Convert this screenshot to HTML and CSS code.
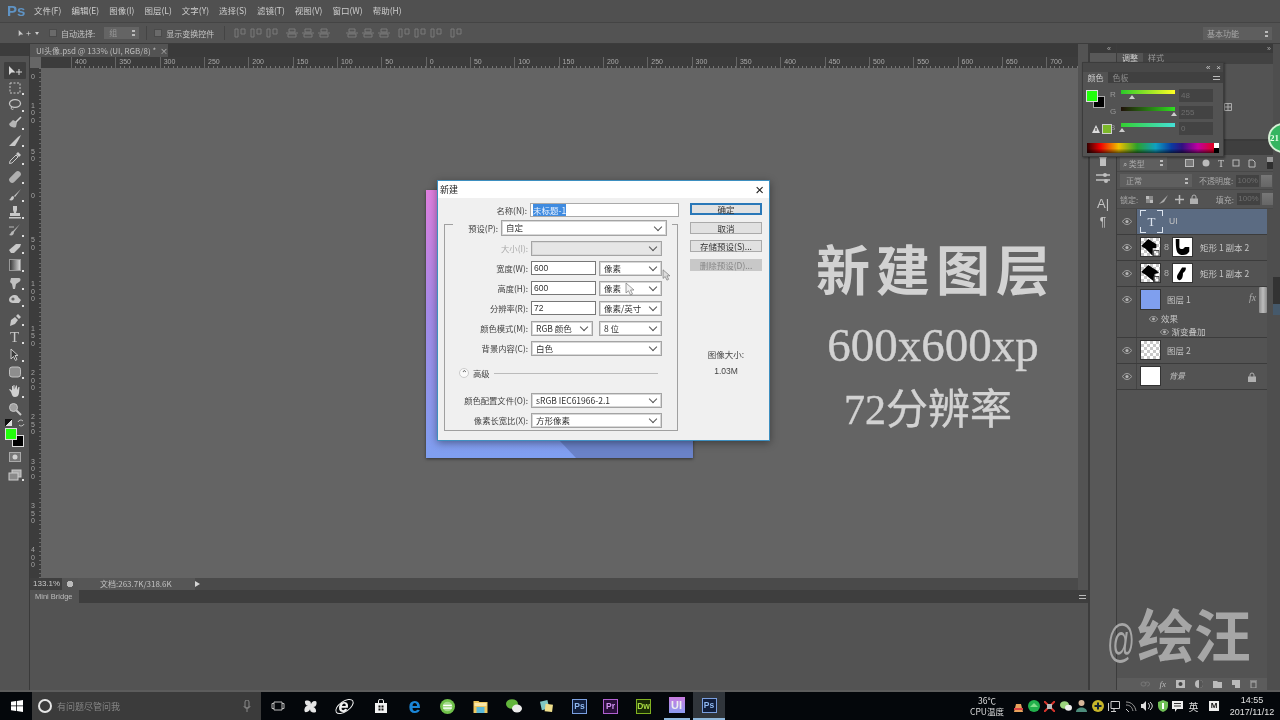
FILE: index.html
```html
<!DOCTYPE html>
<html lang="zh">
<head>
<meta charset="utf-8">
<title>Photoshop 新建</title>
<link rel="stylesheet" href="styles.css">
</head>
<body>
<svg class="sprite" width="0" height="0">
  <symbol id="eye" viewBox="0 0 12 8"><path d="M.5 4C2.5 1 4.200 .5 6 .5S9.500 1 11.500 4C9.500 7 7.800 7.500 6 7.500S2.500 7 .5 4Z" fill="none" stroke="#b5b5b5"/><circle cx="6" cy="4" r="1.900" fill="#b5b5b5"/></symbol>
  <symbol id="align" viewBox="0 0 12 10"><path d="M1 1h3v8H1zM7 1h4v5H7z" fill="none" stroke="#7b7b7b"/></symbol>
  <symbol id="align2" viewBox="0 0 12 10"><path d="M0 5h12M3 1h6v3H3zM2 6h8v3H2z" fill="none" stroke="#7b7b7b"/></symbol>
  <symbol id="lock" viewBox="0 0 8 10"><path d="M2 5V3a2 2 0 0 1 4 0v2" fill="none" stroke="#b0b0b0"/><rect y="4.500" width="8" height="5.500" fill="#b0b0b0"/></symbol>
</svg>

<div class="app">
  <header class="menubar">
    <span class="logo">Ps</span>
    <nav class="menu">
      <span>文件(F)</span><span>编辑(E)</span><span>图像(I)</span><span>图层(L)</span><span>文字(Y)</span><span>选择(S)</span><span>滤镜(T)</span><span>视图(V)</span><span>窗口(W)</span><span>帮助(H)</span>
    </nav>
  </header>

  <div class="options">
    <svg class="opt-move" viewBox="0 0 20 10" width="14" height="7"><path d="M1 0v9l2.500-2.500h4z" fill="#c8c8c8"/><path d="M12 5h6M15 2v6" stroke="#c8c8c8"/></svg>
    <span class="opt-caret"></span>
    <span class="check"></span>
    <span class="opt-label">自动选择:</span>
    <span class="opt-select">组<i class="spin"></i></span>
    <span class="opt-sep"></span>
    <span class="check"></span>
    <span class="opt-label">显示变换控件</span>
    <span class="opt-sep opt-sep-b"></span>
    <div class="aligns">
      <svg width="12" height="10"><use href="#align"/></svg><svg width="12" height="10"><use href="#align"/></svg><svg width="12" height="10"><use href="#align"/></svg>
      <svg class="gap" width="12" height="10"><use href="#align2"/></svg><svg width="12" height="10"><use href="#align2"/></svg><svg width="12" height="10"><use href="#align2"/></svg>
      <svg class="gap-l" width="12" height="10"><use href="#align2"/></svg><svg width="12" height="10"><use href="#align2"/></svg><svg width="12" height="10"><use href="#align2"/></svg>
      <svg class="gap" width="12" height="10"><use href="#align"/></svg><svg width="12" height="10"><use href="#align"/></svg><svg width="12" height="10"><use href="#align"/></svg>
      <svg class="gap" width="12" height="10"><use href="#align"/></svg>
    </div>
    <span class="workspace-select">基本功能<i class="spin"></i></span>
  </div>

  <div class="workspace">
    <aside class="tools">
      <div class="tools-top"></div>
      <div class="tool active"><svg viewBox="0 0 16 12" width="16" height="12"><path d="M2 1v9l2.500-2.500h4z" fill="#d6d6d6"/><path d="M9 7h6M12 4v6" stroke="#d6d6d6"/></svg></div>
      <div class="tool more"><svg viewBox="0 0 12 12" width="12" height="12"><rect x="1" y="1" width="10" height="10" fill="none" stroke="#c8c8c8" stroke-dasharray="2 1.500"/></svg></div>
      <div class="tool more"><svg viewBox="0 0 14 14" width="14" height="14"><ellipse cx="7" cy="5.500" rx="5.500" ry="3.800" fill="none" stroke="#c8c8c8" stroke-width="1.300"/><path d="M3.500 9c-1 2 .5 3 2 2" fill="none" stroke="#c8c8c8"/></svg></div>
      <div class="tool more"><svg viewBox="0 0 14 14" width="14" height="14"><path d="M1 8a5 5 0 0 0 7 3l1-5-4-2z" fill="#b5b5b5"/><path d="M8 6l5-5" stroke="#d0d0d0" stroke-width="1.600"/></svg></div>
      <div class="tool more"><svg viewBox="0 0 14 14" width="14" height="14"><path d="M1 12 10 3l3-2-2 4-4 7z" fill="#c8c8c8"/></svg></div>
      <div class="tool more sep"><svg viewBox="0 0 14 14" width="14" height="14"><path d="M1.500 12.500 2 10l6-6 2 2-6 6z" fill="none" stroke="#c8c8c8"/><path d="M8 3l2-2 3 3-2 2z" fill="#c8c8c8"/></svg></div>
      <div class="tool more"><svg viewBox="0 0 14 14" width="14" height="14"><rect x="4" y="0" width="6" height="14" rx="3" transform="rotate(45 7 7)" fill="#b0b0b0"/></svg></div>
      <div class="tool more"><svg viewBox="0 0 14 14" width="14" height="14"><path d="M13 1 6 8l1 1z" fill="#c8c8c8"/><path d="M1 12c3 1 5 0 5-3L5 8C3 8 3 11 1 12z" fill="#c8c8c8"/></svg></div>
      <div class="tool more"><svg viewBox="0 0 14 14" width="14" height="14"><path d="M5 1h4v4l-1 3h4v3H2V8h4L5 5zM1 12h12v1.500H1z" fill="#c8c8c8"/></svg></div>
      <div class="tool more"><svg viewBox="0 0 14 14" width="14" height="14"><path d="M12 1 5 8l1 1zM1 12c3 1 5 0 5-3L5 8C3 8 3 11 1 12z" fill="#b8b8b8"/><path d="M1 4h5" stroke="#b8b8b8"/></svg></div>
      <div class="tool more"><svg viewBox="0 0 14 14" width="14" height="14"><path d="M1 9 8 3h5l-1 3-6 6H3z" fill="#c8c8c8"/></svg></div>
      <div class="tool more"><svg viewBox="0 0 12 12" width="12" height="12"><defs><linearGradient id="tg"><stop offset="0" stop-color="#333"/><stop offset="1" stop-color="#ddd"/></linearGradient></defs><rect x=".5" y=".5" width="11" height="11" fill="url(#tg)" stroke="#999"/></svg></div>
      <div class="tool more"><svg viewBox="0 0 14 14" width="14" height="14"><path d="M3 2h8c2 0 2 3 0 4L8 8l-1 5H5L4 8 2 6z" fill="#c0c0c0"/></svg></div>
      <div class="tool more sep"><svg viewBox="0 0 14 14" width="14" height="14"><path d="M1 7c0-3 3-5 6-5 2 0 3 1 3 2l3 3-2 3-6 0C3 10 1 9 1 7z" fill="#c8c8c8"/><circle cx="5" cy="6" r="1.600" fill="#666"/></svg></div>
      <div class="tool more"><svg viewBox="0 0 14 14" width="14" height="14"><path d="M2 13 3 7l4-3 3 3-3 4zM8 3l2-2 3 3-2 2z" fill="#c8c8c8"/></svg></div>
      <div class="tool more"><span class="tool-t">T</span></div>
      <div class="tool more"><svg viewBox="0 0 12 14" width="12" height="14"><path d="M2 1v10l2.500-2.500 2 4 1.500-1-2-4H9z" fill="#3c3c3c" stroke="#c8c8c8"/></svg></div>
      <div class="tool more sep"><svg viewBox="0 0 12 12" width="12" height="12"><rect x=".5" y="1" width="11" height="10" rx="2.500" fill="#8e8e8e" stroke="#c0c0c0"/></svg></div>
      <div class="tool more"><svg viewBox="0 0 14 14" width="14" height="14"><path d="M3 8 1 5.500 2 5l2 1.500V2h1v3.500L5.500 1h1v4.500L8 1.500h1V6l1.500-3h1L11 9c-.5 3-2 4-4 4-2.500 0-3-2-4-5z" fill="#d0d0d0"/></svg></div>
      <div class="tool"><svg viewBox="0 0 14 14" width="14" height="14"><circle cx="5.500" cy="5.500" r="4" fill="#a0a0a0" stroke="#c8c8c8"/><path d="M8.500 8.500 13 13" stroke="#c8c8c8" stroke-width="2"/></svg></div>
      <div class="swatch-tools">
        <span class="mini-defaults"></span>
        <svg class="mini-swap" viewBox="0 0 8 8" width="8" height="8"><path d="M1 3a3 3 0 0 1 5-1M7 5a3 3 0 0 1-5 1" fill="none" stroke="#c0c0c0"/></svg>
      </div>
      <div class="swatches"><span class="sw-bg"></span><span class="sw-fg"></span></div>
      <div class="tool-mask"><svg viewBox="0 0 12 10" width="12" height="10"><rect x=".5" y=".5" width="11" height="9" fill="#777" stroke="#aaa"/><circle cx="6" cy="5" r="2.500" fill="#d0d0d0"/></svg></div>
      <div class="tool more"><svg viewBox="0 0 14 12" width="14" height="12"><rect x="4" y="1" width="9" height="7" fill="#a8a8a8" stroke="#ccc"/><rect x="1" y="4" width="9" height="7" fill="#8a8a8a" stroke="#ccc"/></svg></div>
    </aside>

    <main class="center">
      <div class="tabbar"><span class="doc-tab">UI头像.psd @ 133% (UI, RGB/8) * <b>×</b></span></div>
      <div class="ruler-h">
        <span class="ruler-corner"></span>
        <div class="ruler-h-scale">
          <span>400</span><span>350</span><span>300</span><span>250</span><span>200</span><span>150</span><span>100</span><span>50</span><span>0</span><span>50</span><span>100</span><span>150</span><span>200</span><span>250</span><span>300</span><span>350</span><span>400</span><span>450</span><span>500</span><span>550</span><span>600</span><span>650</span><span>700</span><span>750</span>
        </div>
      </div>
      <div class="canvas-row">
        <div class="ruler-v">
          <span>0</span><span>100</span><span>50</span><span>0</span><span>50</span><span>100</span><span>150</span><span>200</span><span>250</span><span>300</span><span>350</span><span>400</span>
        </div>
        <div class="canvas"></div>
      </div>
      <div class="status">
        <span class="zoom-val">133.1%</span>
        <span class="status-icon"></span>
        <span class="doc-size">文档:263.7K/318.6K</span>
        <span class="status-arrow"></span>
      </div>
      <div class="bridge">
        <div class="bridge-head"><span class="bridge-tab">Mini Bridge</span></div>
        <div class="bridge-body"></div>
      </div>
    </main>

    <aside class="side">
      <div class="side-gap"><span class="panel-menu"></span></div>
      <div class="strip">
        <div class="strip-top"></div>
        <div class="strip-icons">
          <svg viewBox="0 0 14 14" width="14" height="14"><path d="M2 1l2 5h6l2-5M4 6h6v7H4z" fill="#c0c0c0"/></svg>
          <svg viewBox="0 0 14 12" width="14" height="12"><path d="M0 3h14M0 8h14" stroke="#c0c0c0" stroke-width="1.500"/><circle cx="9" cy="3" r="2" fill="#c0c0c0"/><circle cx="10" cy="9" r="2" fill="#c0c0c0"/></svg>
          <span class="strip-a">A|</span>
          <span class="strip-p">¶</span>
        </div>
      </div>
      <div class="panels">
        <div class="dock-top"><span>«</span><span>»</span></div>
        <div class="adjust">
          <div class="panel-tabs"><span class="tab on">调整</span><span class="tab">样式</span></div>
          <div class="adjust-body">
            <svg class="adj-grid" viewBox="0 0 8 8" width="8" height="8"><path d="M.5 .5h7v7h-7zM4 .5v7M.5 4h7" fill="none" stroke="#aaa"/></svg>
          </div>
        </div>
        <div class="layers-head"></div>
        <div class="filter-row">
          <span class="mini-select filter-kind">⌕ 类型<i class="spin"></i></span>
          <div class="filter-icons">
            <svg width="9" height="8"><rect x=".5" y=".5" width="8" height="7" fill="#777" stroke="#bbb"/></svg>
            <svg width="8" height="8"><circle cx="4" cy="4" r="3.500" fill="#bbb"/></svg>
            <span class="fi-t">T</span>
            <svg width="8" height="8"><rect x="1" y="1" width="6" height="6" fill="none" stroke="#bbb"/></svg>
            <svg width="8" height="9"><path d="M1 1h4l2 2v5H1z" fill="none" stroke="#bbb"/></svg>
          </div>
          <span class="filter-toggle"></span>
        </div>
        <div class="blend-row">
          <span class="mini-select blend-kind">正常<i class="spin"></i></span>
          <span class="row-label">不透明度:</span>
          <span class="pct">100%</span><span class="pct-btn"></span>
        </div>
        <div class="lock-row">
          <span class="row-label">锁定:</span>
          <div class="lock-icons">
            <svg width="7" height="7"><rect width="7" height="7" fill="#8a8a8a"/><path d="M0 0h3v3H0zM4 4h3v3H4z" fill="#bbb"/></svg>
            <svg width="10" height="9"><path d="M0 9 4 5 9 0 5 7z" fill="#aaa"/></svg>
            <svg width="9" height="9"><path d="M4.500 0v9M0 4.500h9" stroke="#bbb" stroke-width="1.500"/></svg>
            <svg width="8" height="10"><use href="#lock"/></svg>
          </div>
          <span class="row-label fill-label">填充:</span>
          <span class="pct">100%</span><span class="pct-btn"></span>
        </div>
        <div class="layers">
          <div class="layer layer-text">
            <span class="eye"><svg width="10" height="7"><use href="#eye"/></svg></span>
            <div class="layer-main selected">
              <span class="thumb-text">T</span>
              <span class="lname lname-ui">UI</span>
            </div>
          </div>
          <div class="layer layer-shape">
            <span class="eye"><svg width="10" height="7"><use href="#eye"/></svg></span>
            <div class="layer-main">
              <svg class="thumb checker" viewBox="0 0 21 20"><path d="M0 9 8 1l9 6v4h-4v9L5 12z" fill="#000"/><rect x="14" y="14" width="6" height="6" fill="none" stroke="#333"/></svg>
              <span class="chain">8</span>
              <svg class="thumb mask" viewBox="0 0 21 20"><path d="M3 1h4v9c0 3 5 3 6 0h5v5c-2 4-7 5-11 3-3-2-4-5-4-17z" fill="#000"/></svg>
              <span class="lname">矩形 1 副本 2</span>
            </div>
          </div>
          <div class="layer layer-shape">
            <span class="eye"><svg width="10" height="7"><use href="#eye"/></svg></span>
            <div class="layer-main">
              <svg class="thumb checker" viewBox="0 0 21 20"><path d="M0 9 8 1l9 6 3 3-5 1v9L5 12z" fill="#000"/><rect x="14" y="14" width="6" height="6" fill="none" stroke="#333"/></svg>
              <span class="chain">8</span>
              <svg class="thumb mask" viewBox="0 0 21 20"><path d="M7 18c-3-1-3-4-2-6l5-8 4 0c1 2-1 5-3 6 0 4-1 8-4 8z" fill="#000"/></svg>
              <span class="lname">矩形 1 副本 2</span>
            </div>
          </div>
          <div class="layer layer-fx">
            <span class="eye"><svg width="10" height="7"><use href="#eye"/></svg></span>
            <div class="layer-main">
              <span class="thumb thumb-blue"></span>
              <span class="lname lname-plain">图层 1</span>
              <span class="fx">fx</span>
              <div class="fx-list">
                <div class="fx-head"><svg width="9" height="6"><use href="#eye"/></svg>效果</div>
                <div class="fx-item"><svg width="9" height="6"><use href="#eye"/></svg>渐变叠加</div>
              </div>
            </div>
            <span class="layer-scroll"></span>
          </div>
          <div class="layer layer-plain">
            <span class="eye"><svg width="10" height="7"><use href="#eye"/></svg></span>
            <div class="layer-main">
              <span class="thumb checker"></span>
              <span class="lname lname-plain">图层 2</span>
            </div>
          </div>
          <div class="layer layer-plain">
            <span class="eye"><svg width="10" height="7"><use href="#eye"/></svg></span>
            <div class="layer-main">
              <span class="thumb thumb-white"></span>
              <span class="lname lname-plain lname-bg">背景</span>
              <svg class="bg-lock" width="8" height="10"><use href="#lock"/></svg>
            </div>
          </div>
        </div>
        <footer class="layers-foot">
          <svg width="10" height="6"><path d="M1 3a2 2 0 0 1 2-2h1a2 2 0 0 1 0 4H3a2 2 0 0 1-2-2zM5 3a2 2 0 0 1 2-2h.5a2 2 0 0 1 0 4H7" fill="none" stroke="#777"/></svg>
          <span class="foot-fx">fx</span>
          <svg width="9" height="8"><rect width="9" height="8" fill="#bbb"/><circle cx="4.500" cy="4" r="2" fill="#444"/></svg>
          <svg width="8" height="8"><circle cx="4" cy="4" r="4" fill="#bbb"/><path d="M4 0a4 4 0 0 1 0 8z" fill="#555"/></svg>
          <svg width="9" height="7"><path d="M0 0h4l1 1h4v6H0z" fill="#bbb"/></svg>
          <svg width="8" height="8"><path d="M0 0h8v8H3V5H0z" fill="#bbb"/></svg>
          <svg width="7" height="8"><path d="M0 1h7M1 2h5v6H1z" fill="none" stroke="#aaa"/></svg>
        </footer>
      </div>
      <div class="edge">
        <div class="edge-track"></div>
      </div>
    </aside>
  </div>

  <footer class="taskbar">
    <svg class="start" viewBox="0 0 12 12" width="12" height="12"><path d="M0 1.700 5 1v4.500H0zM5.800 .9 12 0v5.500H5.800zM0 6.300h5v4.700l-5-.7zM5.800 6.300H12V12l-6.200-.9z" fill="#fff"/></svg>
    <div class="search">
      <span class="cortana"></span>
      <span class="search-text">有问题尽管问我</span>
      <svg class="mic" viewBox="0 0 8 12" width="8" height="12"><rect x="2" y="0" width="4" height="8" rx="2" fill="none" stroke="#888"/><path d="M1 6c0 3 6 3 6 0M4 9v3" fill="none" stroke="#888"/></svg>
    </div>
    <div class="apps">
      <span class="app-slot"><svg viewBox="0 0 14 10" width="14" height="10"><path d="M3 1h8v8H3zM3 2.500H1v5h2M11 2.500h2v5h-2" fill="none" stroke="#bbb"/></svg></span>
      <span class="app-slot"><svg viewBox="0 0 16 16" width="15" height="15"><path d="M8 8C4 8 2 6 2 3c0-2 4-2 6 0 1 2 0 4 0 5zM8 8c0-4 2-6 5-6 2 0 2 4 0 6-2 1-4 0-5 0zM8 8c4 0 6 2 6 5 0 2-4 2-6 0-1-2 0-4 0-5zM8 8c0 4-2 6-5 6-2 0-2-4 0-6 2-1 4 0 5 0z" fill="#e5e5e5"/></svg></span>
      <span class="app-slot glyph-e">e</span>
      <span class="app-slot slot-store"><svg viewBox="0 0 14 14" width="14" height="14"><path d="M1 4h12v10H1z" fill="#f2f2f2"/><path d="M4.500 4V2a2.500 2 0 0 1 5 0v2" fill="none" stroke="#f2f2f2"/><path d="M4.500 6.500h2v2h-2zM7.500 6.500h2v2h-2zM4.500 9.500h2v2h-2zM7.500 9.500h2v2h-2z" fill="#111"/></svg></span>
      <span class="app-slot glyph-edge">e</span>
      <span class="app-slot"><svg viewBox="0 0 14 14" width="15" height="15"><circle cx="7" cy="7" r="7" fill="#6fc04a"/><circle cx="7" cy="7" r="4.500" fill="#a6dc8c"/><path d="M3 6h8M3 8.500h8" stroke="#fff" stroke-width="1.200"/></svg></span>
      <span class="app-slot"><svg viewBox="0 0 14 13" width="15" height="13"><path d="M0 1h5l1 1h8v11H0z" fill="#efc75e"/><path d="M3 7h8v6H3z" fill="#5bb8d8"/><path d="M1 3h12v3H1z" fill="#fbe6a6"/></svg></span>
      <span class="app-slot"><svg viewBox="0 0 16 14" width="16" height="14"><ellipse cx="6" cy="5" rx="6" ry="4.800" fill="#62b53c"/><ellipse cx="11" cy="9.500" rx="5" ry="4" fill="#ececec"/></svg></span>
      <span class="app-slot"><svg viewBox="0 0 16 14" width="15" height="13"><path d="M1 2 9 0l2 9-8 2z" fill="#7fc8c4"/><path d="M7 4l8 1-1 8-8-1z" fill="#efdf8c"/></svg></span>
      <span class="app-slot"><span class="adobe ad-ps">Ps</span></span>
      <span class="app-slot slot-pr"><span class="adobe ad-pr">Pr</span></span>
      <span class="app-slot"><span class="adobe ad-dw">Dw</span></span>
      <span class="app-slot running"><span class="ui-tile">UI</span></span>
      <span class="app-slot running current"><span class="adobe ad-ps">Ps</span></span>
    </div>
    <div class="tray">
      <span class="temp">36℃<br>CPU温度</span>
      <div class="tray-icons">
        <svg width="9" height="11"><path d="M2 3h5l2 8H0z" fill="#e9a25c"/><path d="M0 7h9v2H0z" fill="#d44"/></svg>
        <svg width="12" height="12"><circle cx="6" cy="6" r="6" fill="#22b14c"/><path d="M2 7 6 3l4 4z" fill="#7fe08a"/></svg>
        <svg width="11" height="11"><path d="M0 0 11 11M11 0 0 11" stroke="#d8342c" stroke-width="2"/><rect x="3" y="3" width="5" height="5" fill="#bbb"/></svg>
        <svg width="12" height="10"><ellipse cx="4.500" cy="4" rx="4.500" ry="3.800" fill="#9ad27e"/><ellipse cx="8.500" cy="6.800" rx="3.500" ry="3" fill="#eee"/></svg>
        <svg width="11" height="12"><circle cx="5.500" cy="3" r="3" fill="#d7b69a"/><path d="M0 12c0-6 11-6 11 0z" fill="#4d8d7c"/></svg>
        <svg width="12" height="12"><circle cx="6" cy="6" r="6" fill="#c7b62a"/><path d="M6 2.500v7M2.500 6h7" stroke="#123" stroke-width="2"/></svg>
        <svg width="12" height="11"><path d="M3 .5h8.500v7H3zM.5 2v8M3 10.500h5M6 8v2" fill="none" stroke="#cfcfcf"/></svg>
        <svg width="12" height="11"><path d="M1 1c6 0 9 4 10 9M1 4c4 0 6 2 7 6" fill="none" stroke="#999"/><path d="M1 8l3 3" stroke="#ccc"/></svg>
        <svg width="12" height="10"><path d="M0 3h2l3-3v10L2 7H0z" fill="#ddd"/><path d="M7 2c2 2 2 4 0 6M9 1c3 3 3 5 0 8" fill="none" stroke="#ddd"/></svg>
        <svg width="10" height="12"><path d="M5 0 10 2v4c0 3-2 5-5 6-3-1-5-3-5-6V2z" fill="#6fbf55"/><path d="M5 3v6" stroke="#fff" stroke-width="2"/></svg>
        <svg width="11" height="11"><path d="M0 0h11v8H5l-2 3V8H0z" fill="#eee"/><path d="M2 2.500h7M2 5h7" stroke="#333"/></svg>
        <span class="ime">英</span>
        <span class="ime-m">M</span>
      </div>
      <span class="clock">14:55<br>2017/11/12</span>
    </div>
  </footer>

  <div class="doc-image"></div>

  <section class="dialog">
    <div class="dialog-title"><span>新建</span><b>×</b></div>
    <div class="dialog-body">
      <div class="form">
        <div class="row row-name"><label>名称(N):</label><span class="input input-name"><mark>未标题-1</mark></span></div>
        <div class="group">
          <div class="row row-preset"><label>预设(P):</label><span class="select sel-preset">自定</span></div>
          <div class="row disabled"><label>大小(I):</label><span class="select sel-full sel-off"></span></div>
          <div class="row"><label>宽度(W):</label><span class="input input-num">600</span><span class="select sel-unit">像素</span></div>
          <div class="row"><label>高度(H):</label><span class="input input-num">600</span><span class="select sel-unit">像素</span></div>
          <div class="row"><label>分辨率(R):</label><span class="input input-num">72</span><span class="select sel-unit">像素/英寸</span></div>
          <div class="row"><label>颜色模式(M):</label><span class="select sel-mode">RGB 颜色</span><span class="select sel-unit">8 位</span></div>
          <div class="row"><label>背景内容(C):</label><span class="select sel-full">白色</span></div>
          <div class="advanced"><span class="adv-btn">⌃</span><span>高级</span><i></i></div>
          <div class="row"><label>颜色配置文件(O):</label><span class="select sel-full">sRGB IEC61966-2.1</span></div>
          <div class="row"><label>像素长宽比(X):</label><span class="select sel-full">方形像素</span></div>
        </div>
      </div>
      <div class="dialog-side">
        <button class="btn btn-default">确定</button>
        <button class="btn">取消</button>
        <button class="btn">存储预设(S)...</button>
        <button class="btn btn-off">删除预设(D)...</button>
        <p class="img-size">图像大小:<br><span>1.03M</span></p>
      </div>
    </div>
  </section>

  <svg class="cursor cursor-a" viewBox="0 0 10 14" width="10" height="14"><path d="M1 1v10l2.500-2.200L5.500 13 7.500 12 5.500 8H9z" fill="#f2f2f2" stroke="#777" stroke-width=".7"/></svg>
  <svg class="cursor cursor-b" viewBox="0 0 10 14" width="9" height="12"><path d="M1 1v10l2.500-2.200L5.500 13 7.500 12 5.500 8H9z" fill="#ddd" stroke="#666" stroke-width=".7"/></svg>

  <section class="color-panel">
    <div class="cp-head"><span>«</span><span>×</span></div>
    <div class="cp-tabs"><span class="cp-tab on">颜色</span><span class="cp-tab">色板</span><span class="panel-menu"></span></div>
    <div class="cp-body">
      <div class="cp-swatches"><span class="cs-bg"></span><span class="cs-fg"></span></div>
      <div class="cp-sliders">
        <div class="cp-row"><b>R</b><span class="track tr-r"><i class="knob k-r"></i></span><span class="num">48</span></div>
        <div class="cp-row"><b>G</b><span class="track tr-g"><i class="knob k-g"></i></span><span class="num">255</span></div>
        <div class="cp-row"><b>B</b><span class="track tr-b"><i class="knob k-b"></i></span><span class="num">0</span></div>
      </div>
      <div class="cp-warn"><svg width="8" height="8"><path d="M4 0 8 8H0z" fill="#ddd"/><path d="M4 3v3" stroke="#333"/></svg><span></span></div>
    </div>
    <div class="spectrum"><span></span></div>
  </section>

  <span class="badge">21</span>

  <div class="headline">
    <h1>新建图层</h1>
    <p class="hl-size">600x600xp</p>
    <p class="hl-res">72分辨率</p>
  </div>
  <div class="watermark"><span>@</span>绘汪</div>
</div>
</body>
</html>
```

FILE: styles.css
```css
* { box-sizing: border-box; }
html, body { margin: 0; padding: 0; width: 1280px; height: 720px; overflow: hidden; background: #000; }
body { font-family: "Noto Sans CJK SC", "Liberation Sans", sans-serif; font-size: 8px; color: #c4c4c4; }
.sprite { position: absolute; }
svg { display: block; flex: none; }
.app { position: relative; width: 1280px; height: 720px; display: flex; flex-direction: column; background: #535353; overflow: hidden; filter: blur(.4px); }

/* menu */
.menubar { height: 22px; flex: none; display: flex; align-items: center; padding-bottom: 2px; background: #505050; }
.logo { width: 34px; padding-left: 7px; font: bold 15px "Liberation Sans", sans-serif; color: #5f93c4; }
.menu { display: flex; gap: 10px; font-size: 8.500px; color: #cdcdcd; }
.menu span { white-space: nowrap; }

/* options */
.options { height: 22px; flex: none; display: flex; align-items: center; padding-left: 18px; background: #535353; border-top: 1px solid #444; border-bottom: 1px solid #3c3c3c; font-size: 8px; position: relative; }
.opt-caret { width: 0; height: 0; margin-left: 3px; border: 2px solid transparent; border-top: 3px solid #ccc; margin-top: 3px; }
.check { width: 8px; height: 8px; background: #6a6a6a; border: 1px solid #4a4a4a; }
.opt-caret + .check { margin-left: 10px; }
.opt-label { margin-left: 4px; white-space: nowrap; }
.opt-select { width: 35px; height: 12px; margin-left: 9px; padding-left: 5px; background: #646464; font-size: 8px; line-height: 12px; color: #999; position: relative; }
.spin { position: absolute; right: 4px; top: 50%; width: 3px; height: 6px; margin-top: -3px; border-top: 2px solid #bbb; border-bottom: 2px solid #bbb; }
.opt-sep { width: 1px; height: 14px; margin: 0 7px; background: #444; }
.opt-sep-b { margin: 0 9px 0 10px; }
.aligns { display: flex; gap: 4px; }
.aligns .gap { margin-left: 4px; }
.aligns .gap-l { margin-left: 12px; }
.workspace-select { position: absolute; left: 1203px; top: 4px; width: 69px; height: 13px; padding-left: 4px; background: #5e5e5e; font-size: 8px; line-height: 13px; color: #a8a8a8; }

.workspace { flex: 1; display: flex; min-height: 0; }

/* tools */
.tools { width: 30px; flex: none; display: flex; flex-direction: column; align-items: center; background: #535353; border-right: 1px solid #3a3a3a; }
.tools-top { height: 18px; width: 100%; background: linear-gradient(#3c3c3c 12px, #535353 12px); flex: none; }
.tool { width: 22px; height: 17.600px; display: flex; align-items: center; justify-content: center; position: relative; flex: none; }
.tool.active { background: #3f3f3f; height: 17px; border-radius: 1px; }
.tool.more::after { content: ""; position: absolute; right: 2px; bottom: 2px; width: 2px; height: 2px; background: #ddd; }
.tool.sep { margin-bottom: 1.500px; }
.tool-t { font: 15px "Liberation Serif", serif; color: #c8c8c8; line-height: 1; }
.swatch-tools { width: 20px; height: 9px; display: flex; justify-content: space-between; margin-top: 1px; flex: none; }
.mini-defaults { width: 7px; height: 7px; background: linear-gradient(135deg, #111 50%, #ddd 50%); }
.swatches { width: 20px; height: 20px; margin-left: 1px; position: relative; flex: none; }
.sw-fg { position: absolute; left: 0; top: 0; width: 12px; height: 12px; background: #22ff0c; border: 1px solid #ddd; }
.sw-bg { position: absolute; left: 7px; top: 7px; width: 12px; height: 12px; background: #000; border: 1px solid #ddd; }
.tool-mask { height: 18px; flex: none; display: flex; align-items: center; }

/* center */
.center { width: 1048px; flex: none; display: flex; flex-direction: column; min-width: 0; }
.tabbar { height: 13px; flex: none; background: #3a3a3a; }
.doc-tab { display: inline-block; width: 138px; height: 13px; padding-left: 6px; background: #535353; font-size: 8px; line-height: 13px; color: #bcbcbc; white-space: nowrap; }
.doc-tab b { font-weight: 400; margin-left: 2px; }
.ruler-h { height: 11px; flex: none; display: flex; background: #3c3c3c; }
.ruler-corner { width: 11px; flex: none; background: #666; }
.ruler-h-scale { flex: 1; display: flex; padding-left: 30px; overflow: hidden; background: repeating-linear-gradient(90deg, #777 0 1px, transparent 1px 4.430px) 30px 9px / 100% 2px no-repeat, #3c3c3c; }
.ruler-h-scale span { width: 44.330px; flex: none; padding-left: 3px; border-left: 1px solid #666; font: 7px/9px "Liberation Sans", sans-serif; color: #a8a8a8; }
.canvas-row { height: 510px; flex: none; display: flex; }
.ruler-v { width: 11px; flex: none; overflow: hidden; background: repeating-linear-gradient(#6a6a6a 0 1px, transparent 1px 4.430px) 9px 0 / 2px 100% no-repeat, #3c3c3c; padding-top: 4.500px; }
.ruler-v span { display: block; height: 44.330px; width: 5px; margin-left: 1px; font: 7px/7.500px "Liberation Sans", sans-serif; color: #a5a5a5; word-break: break-all; }
.ruler-v span:first-child { height: 29px; }
.ruler-v span:nth-child(2) { height: 46px; }
.canvas { flex: 1; background: #646464; }
.status { height: 12px; flex: none; display: flex; align-items: center; background: #4a4a4a; font-size: 8px; }
.zoom-val { width: 32px; height: 12px; padding-left: 3px; background: #3f3f3f; font: 8px/12px "Liberation Sans", sans-serif; color: #c8c8c8; }
.status-icon { width: 16px; height: 12px; background: radial-gradient(circle at 8px 6px, #bbb 3px, #555 3.500px); }
.doc-size { width: 117px; height: 12px; padding-left: 22px; background: #565656; line-height: 12px; color: #c0c0c0; white-space: nowrap; }
.status-arrow { width: 0; height: 0; border: 3px solid transparent; border-left: 5px solid #d5d5d5; }
.bridge { height: 100px; flex: none; display: flex; flex-direction: column; }
.bridge-head { height: 13px; flex: none; display: flex; background: #3e3e3e; }
.bridge-tab { width: 49px; padding-left: 5px; background: #535353; font: 7.500px/13px "Liberation Sans", sans-serif; color: #bcbcbc; white-space: nowrap; }
.bridge-body { flex: 1; background: #535353; }
.panel-menu { width: 7px; height: 4px; border-top: 1px solid #bbb; border-bottom: 1px solid #bbb; }

/* side */
.side { flex: 1; display: flex; min-width: 0; }
.side-gap { width: 12px; flex: none; position: relative; background: linear-gradient(#535353 546px, #3e3e3e 546px, #3e3e3e 559px, #535353 559px); border-right: 2px solid #3c3c3c; }
.side-gap .panel-menu { position: absolute; left: 1px; top: 551px; }
.strip { width: 27px; flex: none; display: flex; flex-direction: column; background: #585858; border-right: 1px solid #3c3c3c; }
.strip-top { height: 20px; background: linear-gradient(#3a3a3a 9px, #585858 9px); flex: none; }
.strip-icons { flex: 1; display: flex; flex-direction: column; align-items: center; padding-top: 89px; gap: 5px; }
.strip-a { margin-top: 8px; font: 13px/14px "Liberation Sans", sans-serif; color: #c4c4c4; }
.strip-p { font: 12px/12px "Liberation Sans", sans-serif; color: #c4c4c4; }
.panels { width: 156px; flex: none; display: flex; flex-direction: column; background: #4e4e4e; }
.dock-top { height: 9px; background: #3a3a3a; flex: none; display: flex; justify-content: space-between; padding: 0 2px 0 0; font: 7px/9px "Liberation Sans", sans-serif; color: #aaa; }
.dock-top span:first-child { margin-left: -10px; }
.adjust { height: 88px; flex: none; display: flex; flex-direction: column; background: #535353; }
.panel-tabs { height: 11px; display: flex; background: #424242; flex: none; }
.tab { padding: 0 5px; font-size: 8px; line-height: 9px; color: #999; }
.tab.on { background: #535353; color: #ccc; }
.adjust-body { flex: 1; position: relative; border-bottom: 2px solid #3a3a3a; }
.adj-grid { position: absolute; left: 107px; top: 39px; }
.layers-head { height: 14px; background: #3f3f3f; flex: none; }
.filter-row, .blend-row, .lock-row { display: flex; align-items: center; padding-left: 3px; flex: none; background: #535353; font-size: 8px; color: #aaa; border-bottom: 1px solid #484848; }
.filter-row { height: 17px; }
.blend-row { height: 18px; }
.lock-row { height: 19px; }
.mini-select { height: 13px; padding-left: 6px; background: #5f5f5f; line-height: 13px; position: relative; white-space: nowrap; }
.filter-kind { width: 47px; padding-left: 3px; }
.blend-kind { width: 72px; }
.filter-icons { display: flex; align-items: center; gap: 8px; margin-left: 18px; }
.fi-t { font: 10px "Liberation Serif", serif; color: #ccc; }
.filter-toggle { width: 6px; height: 12px; margin-left: auto; margin-right: 0; background: linear-gradient(#999 45%, #2f2f2f 45%); }
.row-label { margin-left: 7px; white-space: nowrap; }
.lock-row .row-label:first-child { margin-left: 0; }
.fill-label { margin-left: auto !important; }
.pct { width: 23px; height: 12px; margin-left: 3px; background: #424242; font: 8px/12px "Liberation Sans", sans-serif; color: #6f6f6f; text-align: center; }
.pct-btn { width: 11px; height: 12px; margin-left: 2px; background: linear-gradient(#777, #666); }
.lock-icons { display: flex; align-items: center; gap: 6px; margin-left: 8px; }
.layers { width: 150px; flex: 1; display: flex; flex-direction: column; background: #535353; position: relative; }
.layer { display: flex; border-bottom: 1px solid #3c3c3c; position: relative; }
.layer-text, .layer-shape { height: 26px; }
.layer-fx { height: 51px; }
.layer-plain { height: 26px; }
.eye { width: 20px; flex: none; display: flex; justify-content: center; padding-top: 9px; border-right: 1px solid #444; }
.layer-main { flex: 1; display: flex; align-items: flex-start; position: relative; padding: 2px 0 0 3px; }
.selected { background: #5b6b82; }
.thumb-text { width: 23px; height: 23px; margin-top: -1px; font: 13px/23px "Liberation Serif", serif; color: #dde4ee; text-align: center; background:
  linear-gradient(#dde4ee,#dde4ee) 0 0/6px 1px no-repeat, linear-gradient(#dde4ee,#dde4ee) 0 0/1px 6px no-repeat,
  linear-gradient(#dde4ee,#dde4ee) 100% 0/6px 1px no-repeat, linear-gradient(#dde4ee,#dde4ee) 100% 0/1px 6px no-repeat,
  linear-gradient(#dde4ee,#dde4ee) 0 100%/6px 1px no-repeat, linear-gradient(#dde4ee,#dde4ee) 0 100%/1px 6px no-repeat,
  linear-gradient(#dde4ee,#dde4ee) 100% 100%/6px 1px no-repeat, linear-gradient(#dde4ee,#dde4ee) 100% 100%/1px 6px no-repeat; }
.thumb { width: 21px; height: 20px; display: block; flex: none; border: 1px solid #333; }
.checker { background: repeating-conic-gradient(#c8c8c8 0 25%, #fff 0 50%) 0 0 / 6px 6px; }
.mask, .thumb-white { background: #fff; }
.thumb-blue { background: #7f9fee; height: 21px; }
.chain { width: 11px; text-align: center; font: 9px/20px "Liberation Sans", sans-serif; color: #b0b0b0; }
.lname { margin-left: 7px; font-size: 8.500px; line-height: 20px; color: #c4c4c4; white-space: nowrap; }
.lname-ui { margin-left: 6px; line-height: 21px; font-family: "Liberation Sans", sans-serif; }
.lname-plain { margin-left: 6px; }
.lname-bg { font-style: italic; margin-left: 8px; font-size: 8px; }
.fx { position: absolute; left: 112px; top: 3px; font: italic 10px/16px "Liberation Serif", serif; color: #aaa; }
.fx-list { position: absolute; left: 12px; top: 25px; font-size: 8.500px; line-height: 13px; }
.fx-head, .fx-item { display: flex; align-items: center; gap: 3px; white-space: nowrap; }
.fx-item { padding-left: 10.500px; }
.layer-scroll { position: absolute; right: 0; top: 0; width: 8px; height: 26px; background: linear-gradient(90deg, #8d8d8d, #bdbdbd 50%, #8a8a8a); border-radius: 1px; }
.bg-lock { position: absolute; left: 111px; top: 8px; }
.layers-foot { width: 150px; height: 12px; flex: none; display: flex; align-items: center; justify-content: flex-end; gap: 10px; padding-right: 10px; background: #5c5c5c; }
.foot-fx { font: italic 9px "Liberation Serif", serif; color: #bbb; }
.edge { flex: 1; background: #4e4e4e; position: relative; }
.edge-track { position: absolute; left: 0; right: 0; top: 233px; height: 38px; background: linear-gradient(#333 70%, #45596b 70%); }

/* taskbar */
.taskbar { height: 30px; flex: none; display: flex; align-items: center; background: #04070b; border-top: 2px solid #5c5c5c; padding-left: 11px; color: #ddd; }
.search { width: 229px; height: 28px; margin-left: 9px; display: flex; align-items: center; padding-left: 6px; background: #3b3b3b; }
.cortana { width: 14px; height: 14px; border: 2px solid #e6e6e6; border-radius: 50%; }
.search-text { margin-left: 5px; font-size: 9px; color: #868686; }
.mic { margin-left: auto; margin-right: 10px; }
.apps { display: flex; height: 28px; }
.app-slot { width: 33px; height: 28px; display: flex; align-items: center; justify-content: center; flex: none; position: relative; }
.slot-store { margin-left: 4px; }
.glyph-edge { margin-left: 1px; }
.slot-pr { margin-left: -2px; }
.app-slot.running { border-bottom: 2px solid #8fb8dc; width: 26px; margin-left: 3.500px; margin-right: 3.500px; }
.app-slot.current { width: 32px; margin: 0; background: #30353b; }
.glyph-e { font: italic bold 18px/1 "Liberation Sans", sans-serif; color: #f2f2f2; }
.glyph-e::after { content: ""; position: absolute; left: 7px; top: 9px; width: 19px; height: 9px; border: 1px solid #eee; border-radius: 50%; transform: rotate(-35deg); }
.glyph-edge { font: bold 22px/1 "Liberation Sans", sans-serif; color: #1a86d8; }
.adobe { width: 15px; height: 15px; border: 1px solid; font: bold 8.500px/13px "Liberation Sans", sans-serif; text-align: center; }
.ad-ps { background: #101e3c; border-color: #7a9fe0; color: #8fb8f0; }
.ad-pr { background: #2a0f3a; border-color: #b060d0; color: #d090f0; }
.ad-dw { background: #1a2c05; border-color: #80b020; color: #a5d840; }
.ui-tile { width: 16px; height: 16px; background: linear-gradient(#c97ce0, #8c9cf0); font: bold 11px/16px "Liberation Sans", sans-serif; color: #eee; text-align: center; }
.tray { flex: 1; display: flex; align-items: center; justify-content: flex-end; min-width: 0; }
.temp { width: 40px; text-align: center; font-size: 8.500px; line-height: 11.500px; color: #ddd; margin-right: 7px; white-space: nowrap; }
.tray-icons { display: flex; align-items: center; gap: 4.500px; }
.ime { font-size: 10px; color: #ddd; margin-left: 1px; }
.ime-m { width: 10px; height: 10px; margin-left: 6px; background: #eee; color: #111; font: bold 8px/10px "Liberation Sans", sans-serif; text-align: center; }
.clock { width: 60px; margin-left: 3px; margin-right: -2px; text-align: center; font: 9px/12px "Liberation Sans", sans-serif; color: #e0e0e0; }

/* document image */
.doc-image { position: absolute; left: 426px; top: 190px; width: 267px; height: 268px; background: linear-gradient(#df7fdf, #a58ae8 45%, #7f9ff0); box-shadow: 0 1px 3px rgba(0,0,0,.5); }
.doc-image::after { content: ""; position: absolute; inset: 0; background: #6a82c8; clip-path: polygon(133px 250px, 267px 250px, 267px 268px, 150px 268px); }

/* dialog */
.dialog { position: absolute; left: 437px; top: 180px; width: 333px; height: 261px; background: #f0f0f0; border: 1px solid #3d8fc0; box-shadow: 0 2px 8px rgba(0,0,0,.4); color: #333; font-size: 8.300px; }
.dialog-title { height: 17px; display: flex; align-items: center; justify-content: space-between; padding: 0 5px 0 2px; background: #fff; font-size: 9px; color: #222; }
.dialog-title b { font: 400 15px "Liberation Sans", sans-serif; color: #222; }
.dialog-body { display: flex; padding: 4px 0 0 6px; }
.form { width: 234px; flex: none; }
.row { height: 20px; display: flex; align-items: center; padding-left: 21px; }
.row label { width: 62px; flex: none; margin-right: 3px; display: flex; justify-content: flex-end; white-space: nowrap; color: #444; }
.row-name { height: 16px; width: 240px; padding-left: 0; }
.row-name label { width: 83px; }
.input { height: 14px; border: 1px solid #777; background: #fff; line-height: 12px; padding-left: 2px; display: block; flex: none; font-size: 8.500px; }
.input-name { width: 149px; border-color: #aaa; }
.input-name mark { background: #3f8be0; color: #eaf2ff; }
.input-num { width: 65px; font-family: "Liberation Sans", sans-serif; }
.group { height: 207px; margin-top: 6px; border: 1px solid #a0a0a0; }
.row-preset { margin: -7px 5px 0 8px; padding-left: 0; background: #f0f0f0; }
.row-preset label { width: 45px; }
.select { height: 15px; border: 1px solid #a4a4a4; box-shadow: inset 0 0 0 1px #d8d8d8; background: #fff; line-height: 13px; padding-left: 4px; display: block; flex: none; white-space: nowrap; font-size: 8.500px; position: relative; }
.select::after { content: ""; position: absolute; right: 5px; top: 2.500px; width: 5px; height: 5px; border-right: 1px solid #555; border-bottom: 1px solid #555; transform: rotate(45deg); }
.sel-preset { width: 166px; height: 16px; }
.sel-full { width: 131px; }
.sel-off { background: #e6e6e6; }
.sel-unit { width: 63px; margin-left: 3px; }
.sel-mode { width: 62px; margin-right: 3px; }
.disabled label { color: #aaa; }
.advanced { height: 30px; display: flex; align-items: center; padding-left: 14px; gap: 4px; color: #444; }
.adv-btn { width: 10px; height: 10px; border-radius: 50%; background: #fafafa; border: 1px solid #ccc; font: 8px/10px "Liberation Sans", sans-serif; text-align: center; }
.advanced i { width: 164px; height: 1px; background: #bbb; }
.advanced + .row { margin-top: 2px; }
.dialog-side { width: 72px; margin-left: 12px; padding-top: 1px; display: flex; flex-direction: column; gap: 6.500px; }
.btn { height: 12px; padding: 0; border: 1px solid #aaa; background: #e1e1e1; color: #333; font: 8.500px/10px "Noto Sans CJK SC", sans-serif; white-space: nowrap; }
.btn-default { border: 2px solid #2a78b8; line-height: 8px; }
.btn-off { background: #c8c8c8; border-color: #c8c8c8; color: #888; }
.img-size { margin: 69px 0 0; text-align: center; font-size: 8.500px; line-height: 16px; color: #444; }
.img-size span { font-family: "Liberation Sans", sans-serif; }

.cursor { position: absolute; }
.cursor-a { left: 625px; top: 282px; }
.cursor-b { left: 662px; top: 269px; }

/* color panel */
.color-panel { position: absolute; left: 1082px; top: 62px; width: 142px; height: 95px; background: #535353; border: 1px solid #3c3c3c; display: flex; flex-direction: column; box-shadow: 1px 1px 2px rgba(0,0,0,.4); z-index: 1; }
.cp-head { height: 9px; flex: none; display: flex; justify-content: flex-end; gap: 6px; padding-right: 2px; background: #484848; font: 8px/9px "Liberation Sans", sans-serif; color: #ccc; }
.cp-tabs { height: 11px; flex: none; display: flex; align-items: center; background: #404040; }
.cp-tab { width: 25px; height: 11px; text-align: center; font-size: 8px; line-height: 11px; color: #8c8c8c; }
.cp-tab.on { background: #535353; color: #ccc; }
.cp-tabs .panel-menu { margin-left: auto; margin-right: 3px; }
.cp-body { flex: 1; position: relative; }
.cp-swatches { position: absolute; left: 3px; top: 7px; width: 20px; height: 19px; }
.cs-fg { position: absolute; left: 0; top: 0; width: 12px; height: 12px; background: #22ff0c; border: 1px solid #ddd; }
.cs-bg { position: absolute; left: 7px; top: 6px; width: 12px; height: 12px; background: #000; border: 1px solid #aaa; }
.cp-sliders { position: absolute; left: 27px; top: 6px; display: flex; flex-direction: column; gap: 3.500px; }
.cp-row { display: flex; align-items: flex-start; height: 13px; }
.cp-row b { width: 11px; font: 400 8px/12px "Liberation Sans", sans-serif; color: #999; }
.track { width: 54px; height: 4px; margin-top: 1px; position: relative; display: block; }
.tr-r { background: linear-gradient(90deg, #2ac92a, #ffff24); }
.tr-g { background: linear-gradient(90deg, #201008, #30e020); }
.tr-b { background: linear-gradient(90deg, #34d030, #44e0d8); }
.knob { position: absolute; top: 5px; width: 0; height: 0; border: 3px solid transparent; border-top: 0; border-bottom: 4px solid #ccc; }
.k-r { left: 8px; }
.k-g { left: 50px; }
.k-b { left: -2px; }
.num { width: 34px; height: 13px; margin-left: 4px; padding-left: 2px; background: #434343; font: 8px/13px "Liberation Sans", sans-serif; color: #6e6e6e; }
.cp-warn { position: absolute; left: 9px; top: 42px; display: flex; gap: 3px; align-items: center; }
.cp-warn span { width: 8px; height: 8px; background: #7cb82a; box-shadow: 0 0 0 1px #cfcfcf; }
.spectrum { height: 10px; margin: 0 4px 3px; flex: none; position: relative; background: linear-gradient(#0000 55%, #0009), linear-gradient(90deg, #300 0, #e00 10%, #f0c000 24%, #2ca02c 38%, #10a0c0 52%, #0a3aa0 64%, #301080 72%, #c000a0 84%, #e00020 96%); }
.spectrum span { position: absolute; right: 0; top: 0; width: 5px; height: 10px; background: linear-gradient(#fff 50%, #000 50%); }

.badge { position: absolute; left: 1268px; top: 123px; width: 30px; height: 30px; padding-left: 0; border: 2px solid #d5f0d5; border-radius: 50%; background: #35b560; font: bold 9px/26px "Liberation Serif", serif; color: #e8ffe8; z-index: 2; }

/* overlays */
.headline { position: absolute; left: 798px; top: 229px; width: 270px; display: flex; flex-direction: column; align-items: center; color: #d2d2d2; }
.headline h1 { margin: 0; font: 700 54px/78px "Noto Sans CJK SC", sans-serif; letter-spacing: 6px; white-space: nowrap; padding-left: 6px; }
.hl-size { margin: 8px 0 0; font: 47px/60px "Liberation Serif", serif; white-space: nowrap; -webkit-text-stroke: .4px #d2d2d2; }
.hl-res { margin: 7px 10px 0 0; font: 42px/56px "Liberation Serif", "Noto Sans CJK SC", sans-serif; white-space: nowrap; -webkit-text-stroke: .4px #d2d2d2; }
.watermark { position: absolute; left: 1107px; top: 592px; font: 700 57px/80px "Noto Sans CJK SC", sans-serif; color: #a6a6a6; white-space: nowrap; }
.watermark span { display: inline-block; width: 30px; font: 400 46px/80px "Liberation Sans", sans-serif; transform: scaleX(.6); transform-origin: left center; }
```
